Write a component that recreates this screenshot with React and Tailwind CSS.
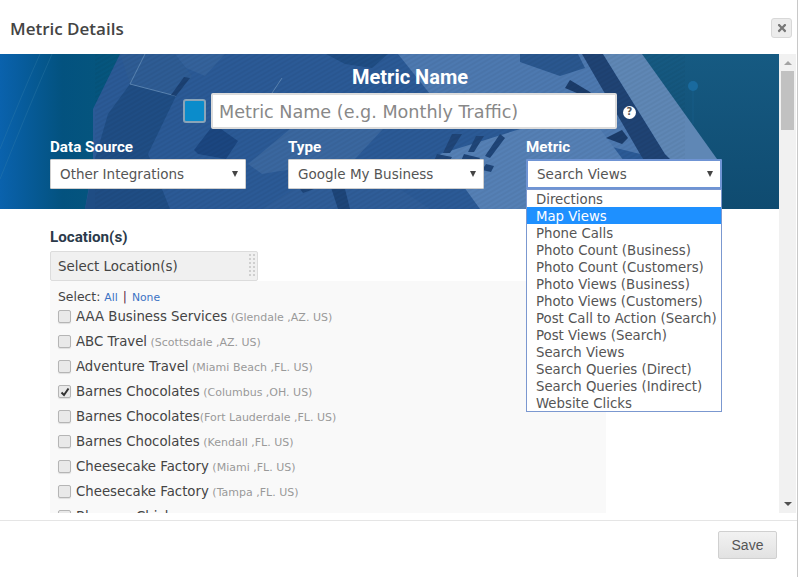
import { FaTimes } from 'react-icons/fa';

const VERDANA = "font-['DejaVu_Sans',sans-serif]";
const HEADING = "font-['Roboto',sans-serif]";

const locations = [
  { name: 'AAA Business Services', place: ' (Glendale ,AZ. US)' },
  { name: 'ABC Travel', place: ' (Scottsdale ,AZ. US)' },
  { name: 'Adventure Travel', place: ' (Miami Beach ,FL. US)' },
  { name: 'Barnes Chocolates', place: ' (Columbus ,OH. US)', checked: true },
  { name: 'Barnes Chocolates', place: '(Fort Lauderdale ,FL. US)' },
  { name: 'Barnes Chocolates', place: ' (Kendall ,FL. US)' },
  { name: 'Cheesecake Factory', place: ' (Miami ,FL. US)' },
  { name: 'Cheesecake Factory', place: ' (Tampa ,FL. US)' },
  { name: 'Bloomer Chicken', place: ' (Los Angeles ,CA. US)' },
];

const metrics = [
  'Directions',
  'Map Views',
  'Phone Calls',
  'Photo Count (Business)',
  'Photo Count (Customers)',
  'Photo Views (Business)',
  'Photo Views (Customers)',
  'Post Call to Action (Search)',
  'Post Views (Search)',
  'Search Views',
  'Search Queries (Direct)',
  'Search Queries (Indirect)',
  'Website Clicks',
];

function BannerArt() {
  return (
    <svg className="absolute inset-0 h-full w-full" viewBox="0 0 779 155" preserveAspectRatio="none">
      <defs>
        <linearGradient id="bannerBase" x1="0" x2="1" y1="0" y2="0">
          <stop offset="0" stopColor="#0a62ad" />
          <stop offset="0.03" stopColor="#075c9c" />
          <stop offset="0.08" stopColor="#03527f" />
          <stop offset="0.16" stopColor="#06577d" />
          <stop offset="1" stopColor="#06577d" />
        </linearGradient>
        <linearGradient id="bannerRight" x1="0" x2="0" y1="0" y2="1">
          <stop offset="0" stopColor="#165a82" />
          <stop offset="1" stopColor="#0f4b70" />
        </linearGradient>
        <pattern id="stripes" width="4" height="4" patternUnits="userSpaceOnUse" patternTransform="rotate(60)">
          <rect width="2" height="4" fill="#000" opacity="0.04" />
        </pattern>
      </defs>
      <rect width="779" height="155" fill="url(#bannerBase)" />
      <rect x="590" width="189" height="155" fill="url(#bannerRight)" />
      <path d="M0 95 Q22 40 40 0 M0 125 Q30 50 52 0" stroke="#3a86ad" strokeWidth="1" fill="none" opacity="0.3" />
      {/* blocks, back to front */}
      <path d="M120 0 L603 0 L722 155 L85 155 L93 110 L93 55 Z" fill="#2b5a96" />
      <path d="M120 0 L175 0 L192 22 L176 42 L130 30 Z" fill="#2e5c94" />
      <path d="M130 30 L176 42 L148 100 L170 155 L85 155 L95 105 L108 60 Z" fill="#1f4d84" />
      <path d="M130 30 L145 0 M130 30 L176 42" stroke="#5a84b2" strokeWidth="1" fill="none" />
      <path d="M176 42 L190 24 L184 23 L171 41 Z" fill="#1b4173" />
      <path d="M175 0 L186 14 L205 22 L225 0 Z" fill="#34629b" />
      <path d="M282 24 L262 54" stroke="#5a84b2" strokeWidth="1" />
      <path d="M326 0 L388 0 L372 14 L345 10 Z" fill="#1f4d84" />
      <path d="M398 0 L585 0 L640 75 L640 100 L560 80 L430 40 Z" fill="#4d79b0" />
      <path d="M520 0 L578 0 L585 14 L560 22 L520 8 Z" fill="#2a578f" />
      <path d="M214 70 L238 87 L226 105 L198 100 L194 96 Z" fill="#1b4680" />
      <path d="M248 110 L290 75 L383 75 L355 105 L262 120 Z" fill="#3a679f" />
      <path d="M262 155 L318 120 L355 105 L430 155 Z" fill="#2f5d98" />
      <path d="M300 135 L320 128 L322 132 L303 139 Z M326 118 L338 155 L350 155 L340 115 Z" fill="#1d4579" />
      <path d="M440 100 L520 75 L600 75 L660 155 L480 155 Z" fill="#5580b5" />
      <path d="M582 0 L603 0 L665 100 L722 155 L675 155 L640 100 Z" fill="#1f4374" />
      <path d="M603 0 L642 0 L722 112 L722 155 L690 125 L665 100 Z" fill="#5f87b5" />
      <path d="M565 34 L570 26 L590 38 L596 44 L584 42 Z M606 84 L622 76 L628 84 L622 90 Z" fill="#1b3c6a" />
      <path d="M452 80 L462 80 L450 99 L443 99 Z M476 82 L484 82 L474 98 L468 98 Z M500 80 L505 84 L490 104 L485 102 Z M437 100 L452 103 L448 110 L434 107 Z M464 100 L480 104 L476 111 L461 107 Z M486 110 L494 112 L491 118 L482 116 Z" fill="#1f4578" />
      <rect width="590" height="155" x="95" fill="url(#stripes)" />
      <circle cx="693" cy="32" r="5" fill="#1a6a9e" />
      <path d="M693 36 L693 70" stroke="#1a6a9e" strokeWidth="1" opacity="0.35" />
    </svg>
  );
}

function SelectBox({ label, value, active }) {
  return (
    <div className="w-[196px]">
      <div className={`mb-[3px] h-[20px] pt-[1px] ${HEADING} text-[15.2px] leading-[20px] font-bold text-white`}>{label}</div>
      <div
        className={`flex h-[30px] items-center justify-between rounded-[1px] border bg-white pr-[7px] pl-[9px] text-[13.5px] text-[#555] ${
          active ? 'border-2 border-[#6f94d4] pl-[8px] pr-[6px]' : 'border-[#cfcfcf]'
        }`}
      >
        <span>{value}</span>
        <span className="h-0 w-0 border-x-[3.5px] border-t-[6px] border-x-transparent border-t-[#444]" />
      </div>
    </div>
  );
}

function Checkbox({ checked }) {
  return (
    <span className="flex h-[13px] w-[13px] shrink-0 items-center justify-center rounded-[2px] border border-[#b5b5b5] bg-[#e9e9e9] shadow-[0_1px_1px_rgba(0,0,0,0.1)]">
      {checked && (
        <svg width="10" height="10" viewBox="0 0 10 10">
          <path d="M1.5 5.5 L4 8 L8.5 1.5" stroke="#333" strokeWidth="2" fill="none" />
        </svg>
      )}
    </span>
  );
}

export default function App() {
  return (
    <div className={`h-[577px] w-[800px] overflow-hidden bg-white ${VERDANA}`}>
      <div className="relative flex h-[577px] w-[798px] flex-col border-r border-[#c8c8c8]">
        {/* header */}
        <div className="flex h-[54px] shrink-0 items-start justify-between pt-[18px] pr-[5px] pl-[10px]">
          <h1 className="font-['Open_Sans',sans-serif] text-[17px] leading-[22px] font-semibold text-[#444]">Metric Details</h1>
          <button
            type="button"
            className="flex h-[20px] w-[21px] items-center justify-center rounded-[3px] border border-[#d8d8d8] bg-[#ececec]"
            aria-label="Close"
          >
            <FaTimes className="h-[12px] w-[12px] text-[#777]" />
          </button>
        </div>

        {/* body */}
        <div className="flex h-[459px] shrink-0">
          <div className="w-[779px] overflow-hidden">
            <div className="relative h-[155px]">
              <BannerArt />
              <div className="relative flex flex-col pt-[12px] pl-[50px]">
                <div className={`h-[23px] pl-[302px] ${HEADING} text-[20px] leading-[23px] font-bold text-white`}>Metric Name</div>
                <div className="mt-[4px] flex h-[36px] items-center pl-[133px]">
                  <span className="mr-[5px] h-[24px] w-[23px] rounded-[3px] border-2 border-[#8aa4b8] bg-[#0b8ccb]" />
                  <div className="flex h-[36px] w-[406px] items-center rounded-[2px] border-2 border-[#dcdcdc] bg-white pt-[2px] pl-[6px] text-[17.6px] text-[#888]">
                    Metric Name (e.g. Monthly Traffic)
                  </div>
                  <span className="mt-[2px] ml-[6px] flex h-[13px] w-[13px] items-center justify-center rounded-full bg-white text-[10px] leading-none font-bold text-[#555]">?</span>
                </div>
                <div className="mt-[7px] flex gap-[42px]">
                  <SelectBox label="Data Source" value="Other Integrations" />
                  <SelectBox label="Type" value="Google My Business" />
                  <SelectBox label="Metric" value="Search Views" active />
                </div>
              </div>
            </div>

            <div className="pl-[50px]">
              <div className={`mt-[18px] h-[20px] ${HEADING} text-[15.2px] leading-[20px] font-bold text-[#2b3a4a]`}>Location(s)</div>
              <div className="relative mt-[4px] flex h-[30px] w-[208px] items-center rounded-[2px] border border-[#dcdcdc] bg-[#f0f0f0] pt-[2px] pl-[7px] text-[13.4px] text-[#444]">
                Select Location(s)
                <span className="absolute top-[2px] right-[2px] grid grid-cols-2 gap-[2px]">
                  {Array.from({ length: 12 }).map((_, i) => (
                    <span key={i} className="h-[2px] w-[2px] bg-[#cfcfcf]" />
                  ))}
                </span>
              </div>
              <div className="h-[232px] w-[556px] overflow-hidden bg-[#f9f9f9] pt-[9px] pl-[8px]">
                <div className="h-[14px] text-[12.4px] leading-[14px] text-[#444]">
                  Select: <span className="text-[10.8px] text-[#3b73c4]">All</span>
                  <span className="mx-[5px] text-[#5a2a4a]">|</span>
                  <span className="text-[10.8px] text-[#3b73c4]">None</span>
                </div>
                <ul className="flex flex-col">
                  {locations.map((loc, i) => (
                    <li key={i} className="flex h-[25px] items-center gap-[5px] whitespace-pre">
                      <Checkbox checked={loc.checked} />
                      <span className="mb-[2px]">
                        <span className="text-[13.3px] text-[#444]">{loc.name}</span>
                        <span className="text-[11px] text-[#999]">{loc.place}</span>
                      </span>
                    </li>
                  ))}
                </ul>
              </div>
            </div>
          </div>

          {/* scrollbar */}
          <div className="flex w-[17px] flex-col items-center bg-[#f1f1f1]">
            <span className="mt-[7px] h-0 w-0 border-x-[4px] border-b-[4px] border-x-transparent border-b-[#a3a3a3]" />
            <span className="mt-[6px] h-[59px] w-[13px] bg-[#c1c1c1]" />
            <span className="mt-auto mb-[7px] h-0 w-0 border-x-[4px] border-t-[4px] border-x-transparent border-t-[#505050]" />
          </div>
        </div>

        {/* footer */}
        <div className="mt-[7px] flex flex-1 items-start justify-end border-t border-[#e5e5e5] pt-[10px] pr-[20px]">
          <button
            type="button"
            className="h-[28px] w-[59px] rounded-[2px] border border-[#d0d0d0] bg-gradient-to-b from-[#f2f2f2] to-[#e2e2e2] font-['Liberation_Sans',sans-serif] text-[14px] text-[#555]"
          >
            Save
          </button>
        </div>

        {/* open dropdown */}
        <ul className="absolute top-[189px] left-[526px] w-[196px] border border-[#7b98d0] bg-white text-[13.3px] leading-[19px] text-[#555]">
          {metrics.map((m) => (
            <li key={m} className={`h-[17px] pl-[9px] ${m === 'Map Views' ? 'bg-[#1e90ff] text-white' : ''}`}>
              {m}
            </li>
          ))}
        </ul>
      </div>
    </div>
  );
}
